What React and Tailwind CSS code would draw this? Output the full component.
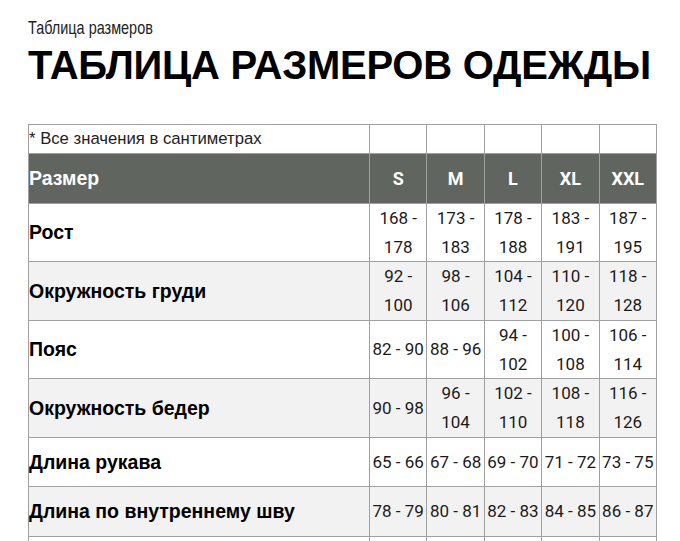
import React from "react";

const sizes = ["S", "M", "L", "XL", "XXL"];

const rows = [
  { label: "Рост", values: ["168 - 178", "173 - 183", "178 - 188", "183 - 191", "187 - 195"] },
  { label: "Окружность груди", values: ["92 - 100", "98 - 106", "104 - 112", "110 - 120", "118 - 128"] },
  { label: "Пояс", values: ["82 - 90", "88 - 96", "94 - 102", "100 - 108", "106 - 114"] },
  { label: "Окружность бедер", values: ["90 - 98", "96 - 104", "102 - 110", "108 - 118", "116 - 126"] },
  { label: "Длина рукава", values: ["65 - 66", "67 - 68", "69 - 70", "71 - 72", "73 - 75"] },
  { label: "Длина по внутреннему шву", values: ["78 - 79", "80 - 81", "82 - 83", "84 - 85", "86 - 87"] },
  { label: "", values: ["", "", "", "", ""] },
];

const arial = "font-['Liberation_Sans',Arial,sans-serif]";
const roboto = "font-['Roboto','Liberation_Sans',sans-serif]";

export default function App() {
  return (
    <div className={`min-h-screen bg-white px-[28px] pt-[18px] text-black ${arial}`}>
      <p className="origin-left scale-x-[0.76] text-[19px] leading-[20px] text-[#222]">
        Таблица размеров
      </p>
      <h1 className="mt-[4px] text-[40px] font-bold leading-[46px] tracking-[-0.25px]">
        ТАБЛИЦА РАЗМЕРОВ ОДЕЖДЫ
      </h1>
      <table className="mt-[36px] w-[629px] table-fixed border-collapse">
        <colgroup>
          <col className="w-[341px]" />
          <col />
          <col />
          <col />
          <col />
          <col />
        </colgroup>
        <tbody>
          <tr className="h-[29px] bg-white">
            <td className="border border-[#a0a0a0] px-0 text-[16.7px] leading-[20px] text-[#222]">
              * Все значения в сантиметрах
            </td>
            {sizes.map((s) => (
              <td key={s} className="border border-[#a0a0a0]" />
            ))}
          </tr>
          <tr className="h-[50px] bg-[#61655f] text-white">
            <td className="border border-[#a0a0a0] px-0 text-[19.5px] font-bold leading-[29px]">Размер</td>
            {sizes.map((s) => (
              <td
                key={s}
                className={`border border-[#a0a0a0] px-0 text-center text-[18px] font-bold leading-[29px] ${roboto}`}
              >
                {s}
              </td>
            ))}
          </tr>
          {rows.map((row, i) => (
            <tr key={i} className={`h-[49.6px] ${i % 2 === 1 ? "bg-[#f2f2f2]" : "bg-white"}`}>
              <td className="border border-[#a0a0a0] px-0 text-[19.5px] font-bold leading-[28.7px]">
                {row.label}
              </td>
              {row.values.map((v, j) => (
                <td
                  key={j}
                  className={`border border-[#a0a0a0] px-[2px] text-center text-[17px] leading-[28.7px] text-[#1a1a1a] ${roboto}`}
                >
                  {v}
                </td>
              ))}
            </tr>
          ))}
        </tbody>
      </table>
    </div>
  );
}
